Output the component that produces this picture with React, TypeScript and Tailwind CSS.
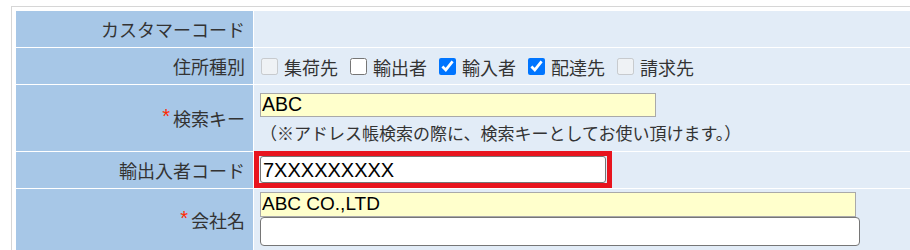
import React from 'react';

const jp = { fontFamily: '"Noto Sans CJK JP", "Noto Sans", sans-serif' };
const latin = { fontFamily: '"Liberation Sans", Arial, sans-serif' };

const kinds = [
  { label: '集荷先', checked: false, disabled: true },
  { label: '輸出者', checked: false, disabled: false },
  { label: '輸入者', checked: true, disabled: false },
  { label: '配達先', checked: true, disabled: false },
  { label: '請求先', checked: false, disabled: true },
];

function Label({ children, required }: { children: React.ReactNode; required?: boolean }) {
  return (
    <div className="bg-[#a7c7e7] flex items-center justify-end pr-[8px] text-[18px] text-[#333333]" style={jp}>
      {required && (
        <span className="text-[#ff2a00] text-[20px] leading-none mr-[3px] -mt-[4px]" style={latin}>
          *
        </span>
      )}
      {children}
    </div>
  );
}

export default function App() {
  return (
    <div className="w-[910px] h-[250px] overflow-hidden bg-white pl-[11px] pt-[6px]">
      <div className="border-t border-l border-[#d6d6d6] pl-[4px] pt-[4px]">
        <div className="grid grid-cols-[237px_1fr] gap-[1px] bg-white">
          <Label>カスタマーコード</Label>
          <div className="bg-[#e2ecf7] h-[36px]" />

          <Label>住所種別</Label>
          <div className="bg-[#e2ecf7] h-[36px] flex items-center pl-[7px] gap-[12px] text-[18px] text-[#333333]" style={jp}>
            {kinds.map((k) => (
              <label key={k.label} className="flex items-center gap-[6px]">
                <input
                  type="checkbox"
                  defaultChecked={k.checked}
                  disabled={k.disabled}
                  className="w-[17px] h-[17px] m-0 accent-[#0075ff]"
                />
                <span className="mt-[3px]">{k.label}</span>
              </label>
            ))}
          </div>

          <Label required>検索キー</Label>
          <div className="bg-[#e2ecf7] h-[66px] pl-[6px] pt-[8px]">
            <input
              readOnly
              value="ABC"
              className="block w-[396px] h-[24px] bg-[#ffffcc] border border-[#a9a9a9] px-[1px] text-[19.5px] text-black outline-none"
              style={latin}
            />
            <div className="text-[17px] text-[#333333] mt-[5px] leading-[22px]" style={jp}>
              （※アドレス帳検索の際に、検索キーとしてお使い頂けます。）
            </div>
          </div>

          <Label>輸出入者コード</Label>
          <div className="bg-[#e2ecf7] h-[36px] relative pl-[6px] pt-[4px]">
            <input
              readOnly
              value="7XXXXXXXXX"
              className="block w-[346px] h-[27px] bg-white border border-[#767676] rounded-[3px] px-[2px] text-[20px] text-black outline-none"
              style={latin}
            />
            <div className="absolute left-0 -top-[1px] w-[358px] h-[37px] border-[5px] border-[#e8141e]" />
          </div>

          <Label required>会社名</Label>
          <div className="bg-[#e2ecf7] h-[62px] pl-[6px] pt-[3px]">
            <input
              readOnly
              value="ABC CO.,LTD"
              className="block w-[596px] h-[25px] bg-[#ffffcc] border border-[#a9a9a9] px-[1px] text-[19px] text-black outline-none"
              style={latin}
            />
            <input
              readOnly
              value=""
              className="block w-[600px] h-[29px] bg-white border border-[#767676] rounded-[4px] outline-none"
            />
          </div>
        </div>
      </div>
    </div>
  );
}
